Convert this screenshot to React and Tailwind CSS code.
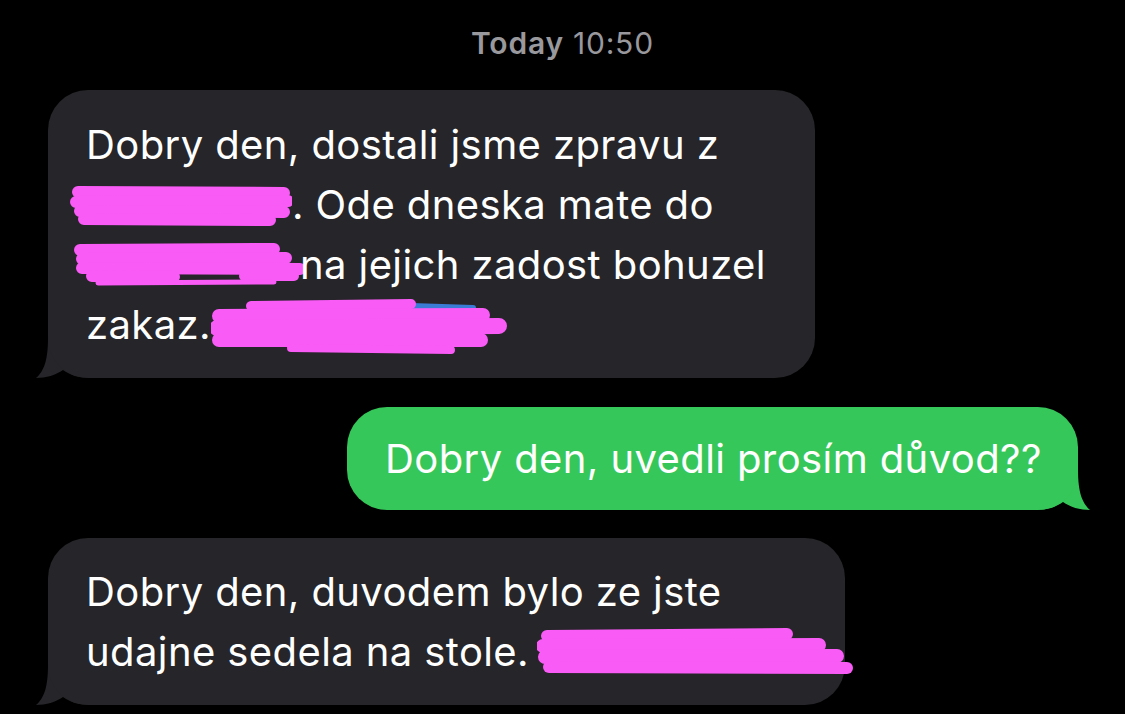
import React from "react";

const GRAY = "#262529";
const PINK = "#f95bf6";

function TailLeft({ color }) {
  return (
    <svg
      className="absolute left-[-16px] bottom-0"
      width="60"
      height="40"
      viewBox="0 0 60 40"
    >
      <path
        d="M16 0 C16 22 12 33 4 40 C14 40 24 37 31 32 C38 37 46 40 60 40 L60 0 Z"
        fill={color}
      />
    </svg>
  );
}

function TailRight({ color }) {
  return (
    <svg
      className="absolute right-[-16px] bottom-0 -scale-x-100"
      width="60"
      height="40"
      viewBox="0 0 60 40"
    >
      <path
        d="M16 0 C16 22 12 33 4 40 C14 40 24 37 31 32 C38 37 46 40 60 40 L60 0 Z"
        fill={color}
      />
    </svg>
  );
}

function Scribble({ w, h, lines, className, extra }) {
  return (
    <svg
      width={w}
      height={h}
      viewBox={`0 0 ${w} ${h}`}
      className={"shrink-0 " + (className || "")}
    >
      {extra}
      {lines.map((l, i) => (
        <path
          key={i}
          d={l.d}
          stroke={PINK}
          strokeWidth={l.sw || 12}
          strokeLinecap="round"
          fill="none"
        />
      ))}
    </svg>
  );
}

const lineCls = "flex items-center h-[60px] whitespace-nowrap";

export default function App() {
  return (
    <div
      className="w-[1125px] h-[714px] overflow-hidden bg-black text-white flex flex-col"
      style={{ fontFamily: "Inter, 'Liberation Sans', sans-serif" }}
    >
      <div className="mt-[28px] h-[30px] flex items-center justify-center text-[30px] tracking-[0.8px] text-[#98989d]">
        <span className="font-semibold">Today</span>
        <span className="ml-[9px]">10:50</span>
      </div>

      {/* Bubble 1 */}
      <div className="mt-[32px] ml-[48px] relative w-[767px]">
        <TailLeft color={GRAY} />
        <div
          className="relative rounded-[40px] pl-[38px] pt-[25px] pb-[23px] text-[40px] tracking-[0.4px] leading-[60px]"
          style={{ backgroundColor: GRAY }}
        >
          <div className={lineCls}>Dobry den, dostali jsme zpravu z</div>
          <div className={lineCls}>
            <Scribble
              w={222}
              h={42}
              className="ml-[-16px]"
              lines={[
                { d: "M8 8 L214 9" },
                { d: "M6 18 L218 17" },
                { d: "M10 27 L214 28" },
                { d: "M14 35 L200 36" },
              ]}
            />
            <span className="ml-[0px]">. Ode dneska mate do</span>
          </div>
          <div className={lineCls}>
            <Scribble
              w={232}
              h={46}
              className="ml-[-12px]"
              lines={[
                { d: "M6 8 L200 7" },
                { d: "M8 17 L212 16" },
                { d: "M8 26 L226 27" },
                { d: "M18 34 L100 35" },
                { d: "M170 34 L220 34", sw: 10 },
                { d: "M24 41 L200 40", sw: 5 },
              ]}
            />
            <span className="ml-[-6px]">na jejich zadost bohuzel</span>
          </div>
          <div className={lineCls}>
            <span>zakaz.</span>
            <Scribble
              w={296}
              h={60}
              className="ml-[0px] mt-[6px]"
              extra={
                <>
                  <path d="M200 8 L262 10" stroke="#3a7bd5" strokeWidth="6" strokeLinecap="round" />
                  <path d="M250 44 L268 46" stroke="#3a7bd5" strokeWidth="5" strokeLinecap="round" />
                </>
              }
              lines={[
                { d: "M40 8 L200 6", sw: 10 },
                { d: "M8 18 L272 17", sw: 14 },
                { d: "M6 30 L288 28", sw: 16 },
                { d: "M8 42 L270 42", sw: 14 },
                { d: "M80 50 L240 52", sw: 8 },
              ]}
            />
          </div>
        </div>
      </div>

      {/* Green bubble */}
      <div className="mt-[29px] ml-[347px] relative w-[731px]">
        <TailRight color="#35c759" />
        <div className="relative rounded-[40px] bg-[#35c759] pl-[38px] h-[103px] flex items-center text-[40px] tracking-[0.4px] whitespace-nowrap">
          Dobry den, uvedli prosím důvod??
        </div>
      </div>

      {/* Bubble 3 */}
      <div className="mt-[28px] ml-[48px] relative w-[797px]">
        <TailLeft color={GRAY} />
        <div
          className="relative rounded-[40px] pl-[38px] pt-[24px] pb-[23px] text-[40px] tracking-[0.4px] leading-[60px]"
          style={{ backgroundColor: GRAY }}
        >
          <div className={lineCls}>Dobry den, duvodem bylo ze jste</div>
          <div className={lineCls}>
            <span>udajne sedela na stole.</span>
            <Scribble
              w={318}
              h={48}
              className="ml-[8px]"
              lines={[
                { d: "M10 8 L250 6" },
                { d: "M6 18 L282 17", sw: 14 },
                { d: "M8 29 L300 28", sw: 14 },
                { d: "M12 39 L310 40", sw: 12 },
              ]}
            />
          </div>
        </div>
      </div>
    </div>
  );
}
